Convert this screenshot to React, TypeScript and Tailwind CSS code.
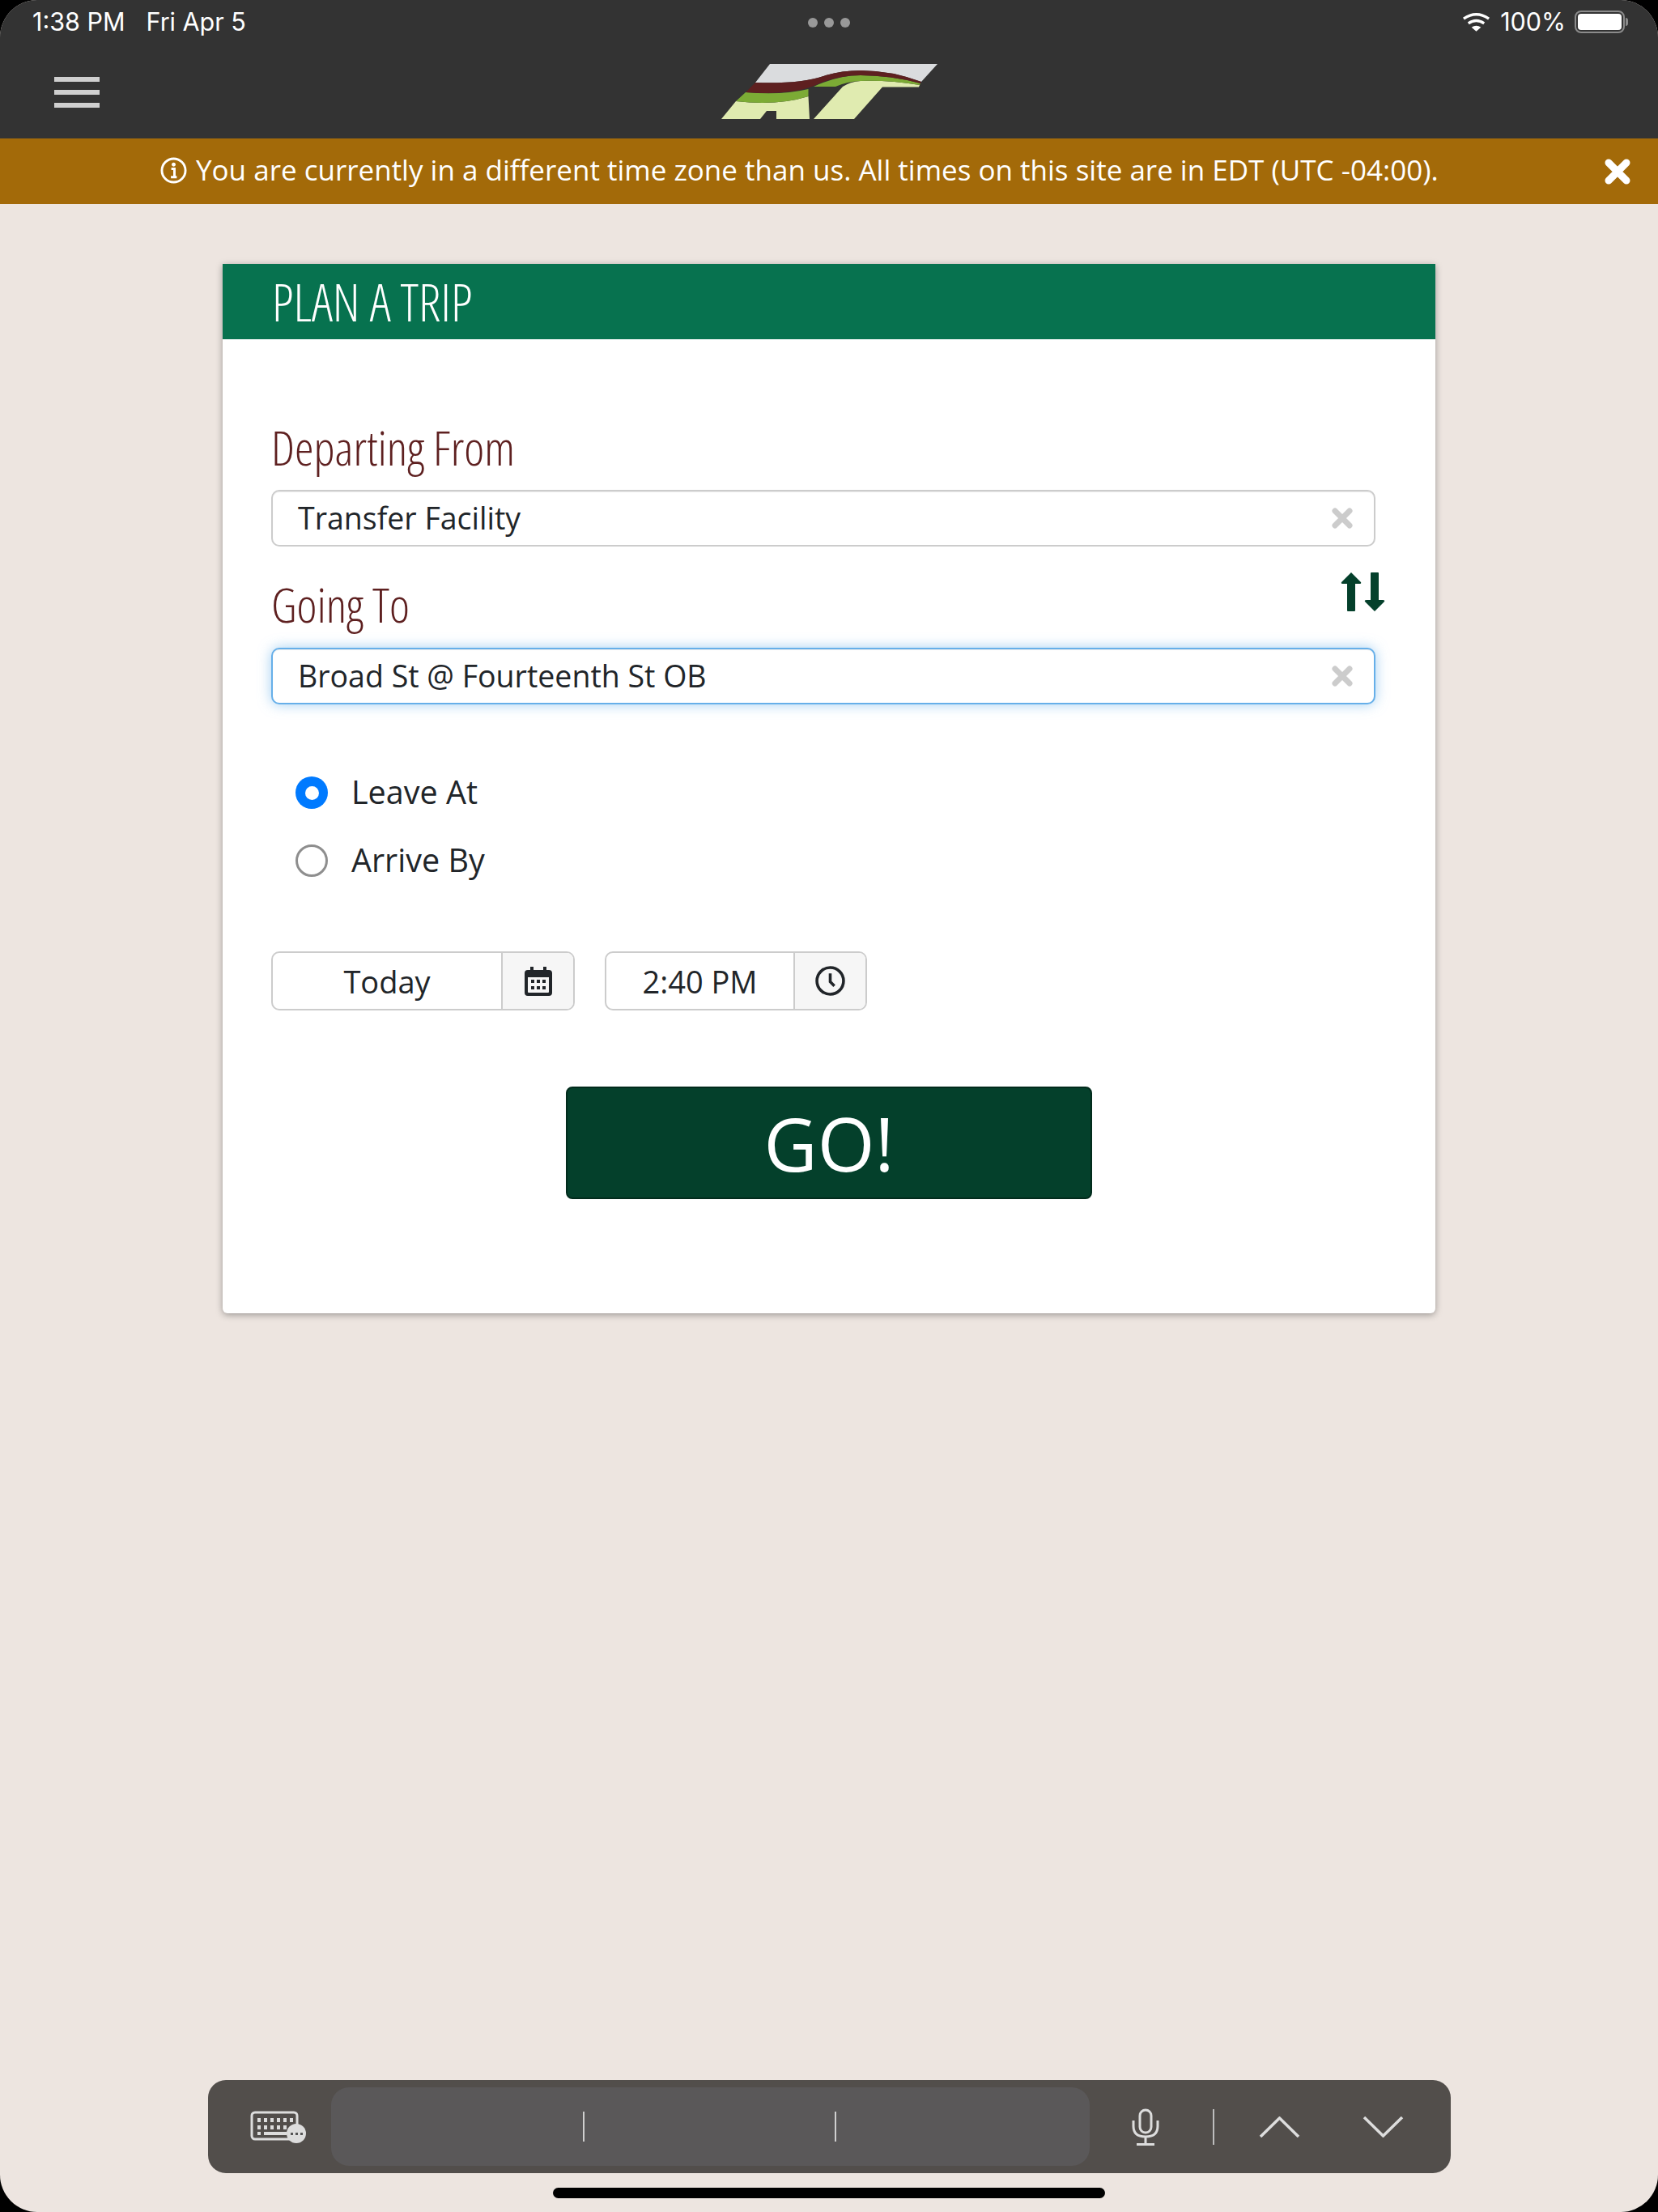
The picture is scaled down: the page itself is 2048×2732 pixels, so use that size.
const openSans = "font-['Open_Sans',sans-serif]";
const condensed = "font-['Open_Sans',sans-serif] [font-stretch:75%] font-light";

function Logo() {
  return (
    <svg viewBox="0 0 320 110" className="block h-[110px] w-[320px]">
      <path d="M91 29 H298 L278 51 Q240 37 203 37 Q180 37 160 43 Q130 54 73 52 Z" fill="#dadcde" />
      <path d="M31 97 L49 75 Q100 81 138.5 69 L140 97 H99 V87 H87 L79 97 Z" fill="#e0ebb0" />
      <path d="M145 97 L181 57 Q190 51 203 50 Q240 49 276 55 L275 57.5 H230 L195 97 Z" fill="#e0ebb0" />
      <path d="M61 64 Q105 68 138.5 60 V69 Q100 81 49 75 Z" fill="#7cab35" />
      <path d="M145 57 Q175 43 203 43 Q240 43 277 53 L276 55 Q240 49 203 50 Q185 51 172 57 Z" fill="#7cab35" />
      <path d="M73 52 Q130 54 160 43 Q180 37 203 37 Q240 37 278 51 L277 53 Q240 43 203 43 Q175 43 150 54 Q120 68 61 64 Z" fill="#5e2020" />
    </svg>
  );
}

function ClearIcon() {
  return (
    <svg viewBox="0 0 26 26" className="h-[26px] w-[26px]">
      <path d="M4 4 L22 22 M22 4 L4 22" stroke="#cccccc" strokeWidth="7" strokeLinecap="round" />
    </svg>
  );
}

function SwapIcon() {
  return (
    <svg viewBox="0 0 56 50" className="mt-[31px] h-[50px] w-[56px]" fill="#04402b">
      <path d="M13 1 L25 13 Q26 15 23 15 H18 V48 Q18 49 17 49 H9 Q8 49 8 48 V15 H3 Q0 15 1 13 Z" />
      <path d="M42 49 L30 37 Q29 35 32 35 H37 V2 Q37 1 38 1 H46 Q47 1 47 2 V35 H52 Q55 35 54 37 Z" />
    </svg>
  );
}

function TextField({ value, focused }: { value: string; focused?: boolean }) {
  return (
    <div
      className={
        "flex h-[70px] items-center justify-between rounded-[10px] border-2 bg-white pl-[31px] pr-[26px] text-[37.5px] text-[#212529] " +
        (focused
          ? "border-[#66afe9] shadow-[inset_0_1px_1px_rgba(0,0,0,0.075),0_0_16px_rgba(102,175,233,0.6)]"
          : "border-[#cccccc] shadow-[inset_0_1px_1px_rgba(0,0,0,0.075)]")
      }
    >
      <span className="pt-[1px]">{value}</span>
      <ClearIcon />
    </div>
  );
}

function Radio({ label, checked }: { label: string; checked?: boolean }) {
  return (
    <div className="flex h-[84px] items-center gap-[29px] pl-[30px]">
      {checked ? (
        <span className="flex h-[40px] w-[40px] items-center justify-center rounded-full bg-[#007aff]">
          <span className="h-[17px] w-[17px] rounded-full bg-white" />
        </span>
      ) : (
        <span className="h-[40px] w-[40px] rounded-full border-[3px] border-[#8e8e8e] bg-white" />
      )}
      <span className="text-[39.5px] text-[#212529]">{label}</span>
    </div>
  );
}

function AddonField({
  value,
  width,
  children,
}: {
  value: string;
  width: string;
  children: React.ReactNode;
}) {
  return (
    <div className={"flex h-[73px] rounded-[10px] border-2 border-[#cccccc] bg-white text-[38px] text-[#212529] " + width}>
      <div className="flex flex-1 items-center justify-center pt-[1px]">{value}</div>
      <div className="flex w-[89px] items-center justify-center rounded-r-[8px] border-l-2 border-[#cccccc] bg-[#f6f6f6]">
        {children}
      </div>
    </div>
  );
}

export default function App() {
  return (
    <div className={"h-[2732px] w-[2048px] overflow-hidden bg-black " + openSans}>
      <div className="flex h-full flex-col overflow-hidden rounded-[46px] bg-[#ede5e0]">
        {/* status bar + nav */}
        <header className="relative h-[171px] shrink-0 bg-[#333333] text-white">
          <div className="flex h-[54px] items-center justify-between pl-[40px] pr-[37px] font-['Inter',sans-serif] text-[30.5px]">
            <div className="flex gap-[26px]">
              <span>1:38 PM</span>
              <span>Fri Apr 5</span>
            </div>
            <div className="flex items-center">
              <svg viewBox="0 0 36 24" className="h-[24px] w-[35px]" fill="none" stroke="#fff" strokeWidth="3.5">
                <path d="M2 8 Q18 -3 34 8 M8 14 Q18 7 28 14" />
                <path d="M12 19 Q18 15 24 19 L18 24 Z" fill="#fff" stroke="none" />
              </svg>
              <span className="ml-[12px]">100%</span>
              <span className="ml-[11px] flex items-center">
                <span className="flex h-[28px] w-[62px] items-center rounded-[8px] border-2 border-[#8b8b8b] p-[2px]">
                  <span className="h-full w-full rounded-[4px] bg-white" />
                </span>
                <span className="ml-[1px] h-[10px] w-[3px] rounded-r-full bg-[#8b8b8b]" />
              </span>
            </div>
          </div>
          <div className="absolute left-[998px] top-[22px] flex gap-[8px]">
            <span className="h-[12px] w-[12px] rounded-full bg-[#999999]" />
            <span className="h-[12px] w-[12px] rounded-full bg-[#999999]" />
            <span className="h-[12px] w-[12px] rounded-full bg-[#999999]" />
          </div>
          <div className="absolute left-[67px] top-[95px] flex w-[56px] flex-col gap-[10px]">
            <span className="h-[6px] bg-[#cfcfcf]" />
            <span className="h-[6px] bg-[#cfcfcf]" />
            <span className="h-[6px] bg-[#cfcfcf]" />
          </div>
          <div className="absolute left-[860px] top-[50px]">
            <Logo />
          </div>
        </header>

        {/* time zone banner */}
        <div className="relative flex h-[81px] shrink-0 items-center gap-[11px] bg-[#a36a09] pb-[2px] pl-[198px] text-[35px] text-white">
          <svg viewBox="0 0 34 34" className="h-[33px] w-[33px]" fill="none" stroke="#fff" strokeWidth="3">
            <circle cx="17" cy="17" r="15" />
            <path d="M14 15 H18 V25 M13.5 25.5 H21" strokeWidth="3" />
            <circle cx="17" cy="9.5" r="2.5" fill="#fff" stroke="none" />
          </svg>
          <span>You are currently in a different time zone than us. All times on this site are in EDT (UTC -04:00).</span>
          <svg viewBox="0 0 34 32" className="absolute left-[1981px] top-[25px] h-[32px] w-[34px]">
            <path d="M6 5 L28 27 M28 5 L6 27" stroke="#fff" strokeWidth="9" strokeLinecap="round" />
          </svg>
        </div>

        {/* trip card */}
        <main className="flex justify-center pt-[74px]">
          <section className="h-[1296px] w-[1498px] rounded-b-[6px] bg-white shadow-[0_2px_8px_rgba(0,0,0,0.35)]">
            <div className={"flex h-[93px] items-center bg-[#07724f] pl-[61px] text-[64px] text-white " + condensed}>
              PLAN A TRIP
            </div>
            <div className="pl-[60px] pr-[74px] pt-[88px]">
              <div className={"pb-[8px] text-[59.5px] leading-[90px] text-[#5e2020] " + condensed}>Departing From</div>
              <TextField value="Transfer Facility" />
              <div className="-mr-[13px] flex items-start justify-between">
                <div className={"pb-[9px] pt-[26px] text-[59.5px] leading-[90px] text-[#5e2020] " + condensed}>Going To</div>
                <SwapIcon />
              </div>
              <TextField value="Broad St @ Fourteenth St OB" focused />
              <div className="pt-[67px]">
                <Radio label="Leave At" checked />
                <Radio label="Arrive By" />
              </div>
              <div className="flex gap-[37px] pt-[70px]">
                <AddonField value="Today" width="w-[375px]">
                  <svg viewBox="0 0 34 36" className="h-[36px] w-[34px]" fill="#212529">
                    <path d="M7 0 H11 V4 H23 V0 H27 V4 H30 Q34 4 34 8 V32 Q34 36 30 36 H4 Q0 36 0 32 V8 Q0 4 4 4 H7 Z M4 13 V31 Q4 32 5 32 H29 Q30 32 30 31 V13 Z" />
                    <path d="M8 16 h4 v4 h-4 z M15 16 h4 v4 h-4 z M22 16 h4 v4 h-4 z M8 24 h4 v4 h-4 z M15 24 h4 v4 h-4 z M22 24 h4 v4 h-4 z" />
                  </svg>
                </AddonField>
                <AddonField value="2:40 PM" width="w-[324px]">
                  <svg viewBox="0 0 36 36" className="h-[37px] w-[37px]" fill="none" stroke="#212529" strokeWidth="3.5">
                    <circle cx="18" cy="18" r="16" />
                    <path d="M18 9 V19 L23 24" />
                  </svg>
                </AddonField>
              </div>
              <div className="flex justify-center pl-[14px] pt-[94px]">
                <button className="h-[139px] w-[650px] rounded-[8px] border-2 border-[#022b1c] bg-[#04402b] text-[91px] text-white">
                  GO!
                </button>
              </div>
            </div>
          </section>
        </main>

        {/* keyboard assistant bar */}
        <div className="mt-auto flex flex-col items-center pb-[17px]">
          <div className="flex h-[115px] w-[1535px] items-center rounded-[22px] bg-[#524e4b] pl-[52px]">
            <svg viewBox="0 0 70 40" className="h-[40px] w-[70px]">
              <rect x="2" y="2" width="56" height="33" rx="4" fill="none" stroke="#ddd" strokeWidth="3" />
              <path d="M9 9h4v5H9zM17 9h4v5h-4zM25 9h4v5h-4zM33 9h4v5h-4zM41 9h4v5h-4zM49 9h4v5h-4zM9 18h4v5H9zM17 18h4v5h-4zM25 18h4v5h-4zM33 18h4v5h-4zM41 18h4v5h-4zM9 26h4v4H9zM17 26h28v4H17z" fill="#ddd" />
              <ellipse cx="57" cy="28" rx="12" ry="12" fill="#ddd" />
              <path d="M50 27h3v3h-3zM56 27h3v3h-3zM62 27h3v3h-3z" fill="#555" />
            </svg>
            <div className="ml-[30px] flex h-[97px] w-[937px] items-center rounded-[22px] bg-[#5a5859] pl-[311px]">
              <span className="h-[37px] w-[2px] bg-[#cfcfcf]" />
              <span className="ml-[309px] h-[37px] w-[2px] bg-[#cfcfcf]" />
            </div>
            <svg viewBox="0 0 34 46" className="ml-[52px] h-[46px] w-[34px]" fill="none" stroke="#ddd" strokeWidth="3">
              <rect x="10" y="2" width="14" height="28" rx="7" />
              <path d="M2 15 V22 Q2 35 17 35 Q32 35 32 22 V15 M17 35 V44 M6 44.5 H28" />
            </svg>
            <span className="ml-[66px] h-[44px] w-[2px] bg-[#bdbdbd]" />
            <svg viewBox="0 0 51 26" className="ml-[55px] h-[26px] w-[51px]" fill="none" stroke="#ddd" strokeWidth="3.5">
              <path d="M2 25 L25.5 2 L49 25" />
            </svg>
            <svg viewBox="0 0 51 26" className="ml-[77px] h-[26px] w-[51px]" fill="none" stroke="#ddd" strokeWidth="3.5">
              <path d="M2 1 L25.5 24 L49 1" />
            </svg>
          </div>
          <div className="mt-[18px] h-[13px] w-[682px] rounded-full bg-black" />
        </div>
      </div>
    </div>
  );
}
